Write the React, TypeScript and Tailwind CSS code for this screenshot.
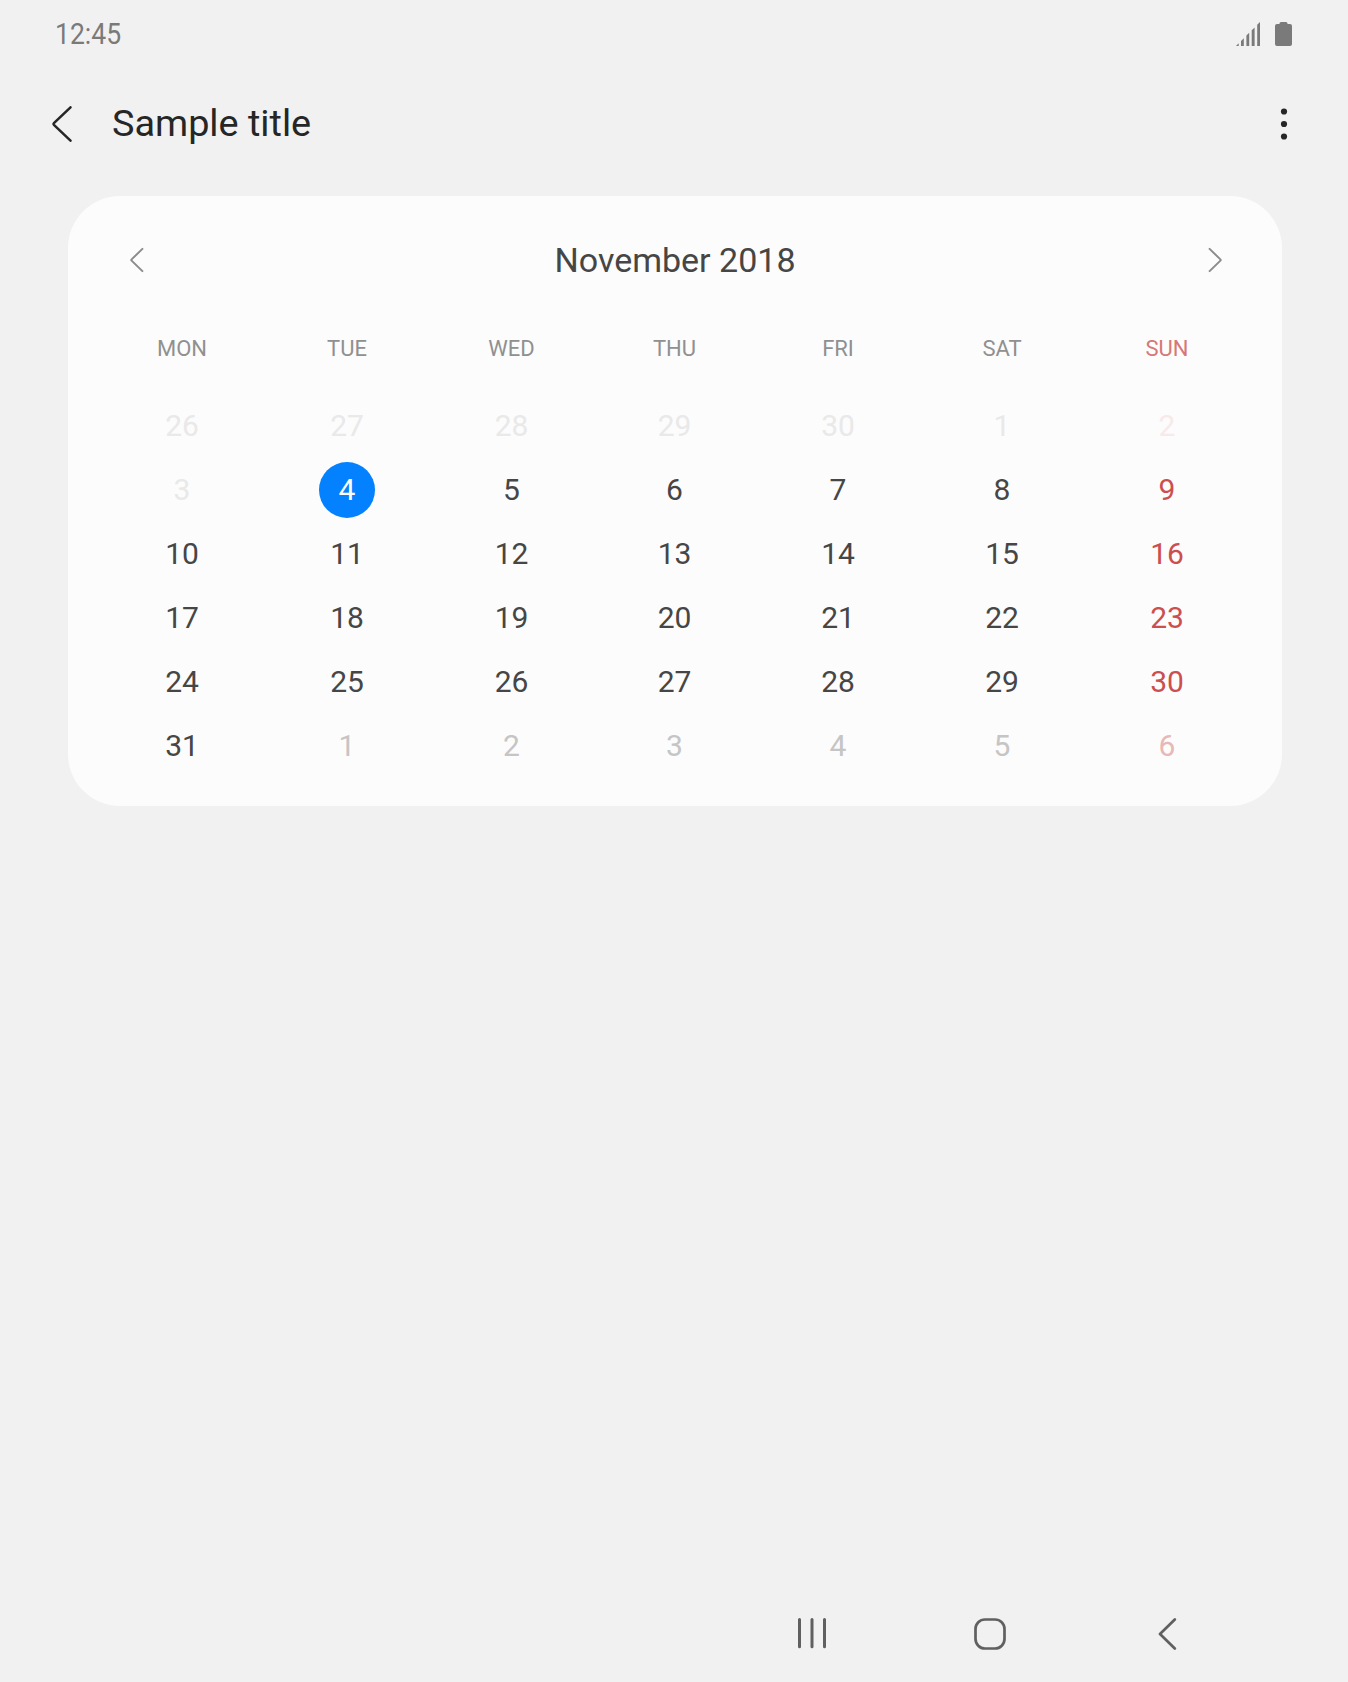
const WEEKDAYS = ["MON", "TUE", "WED", "THU", "FRI", "SAT", "SUN"];

const WEEKS = [
  [26, 27, 28, 29, 30, 1, 2],
  [3, 4, 5, 6, 7, 8, 9],
  [10, 11, 12, 13, 14, 15, 16],
  [17, 18, 19, 20, 21, 22, 23],
  [24, 25, 26, 27, 28, 29, 30],
  [31, 1, 2, 3, 4, 5, 6],
];

const COLUMNS = "grid grid-cols-[164px_166px_163px_163px_164px_164px_166px]";

function dayColor(week: number, col: number) {
  const sunday = col === 6;
  if (week === 0 || (week === 1 && col === 0)) return sunday ? "text-[#f8eaea]" : "text-[#e9e9e9]";
  if (week === 5 && col > 0) return sunday ? "text-[#e8b8b8]" : "text-[#c5c5c5]";
  return sunday ? "text-[#cb4f4f]" : "text-[#464646]";
}

function StatusBar() {
  return (
    <header className="flex h-[68px] items-center justify-between pl-[55px] pr-14 text-[#7a7a7a]">
      <span className="origin-left scale-x-[0.885] text-[30px] leading-none">12:45</span>
      <div className="flex items-start gap-[15px]">
        <svg width="24" height="24" viewBox="0 0 24 24" fill="currentColor">
          <path d="M0 24L2.7 21.3V24ZM5 24V19L7.8 16.2V24ZM10.4 24V13.6L13.2 10.8V24ZM15.7 24V8.3L18.6 5.4V24ZM21.2 24V2.8L24 0V24Z" />
        </svg>
        <svg width="17" height="24" viewBox="0 0 17 24" fill="currentColor">
          <path d="M4.5 1.5Q4.5 0 6 0H11Q12.5 0 12.5 1.5V2H15Q17 2 17 4V22Q17 24 15 24H2Q0 24 0 22V4Q0 2 2 2H4.5Z" />
        </svg>
      </div>
    </header>
  );
}

function AppBar() {
  return (
    <div className="flex h-28 items-center justify-between pl-[52px] pr-[60px] text-[#262626]">
      <div className="flex items-center">
        <svg width="20" height="36" viewBox="0 0 20 36" fill="none" stroke="currentColor" strokeWidth="2.5" strokeLinecap="round" strokeLinejoin="round">
          <path d="M18.5 1.3L1.9 17.2Q1.2 18 1.9 18.8L18.5 34.7" />
        </svg>
        <h1 className="mb-0.5 ml-10 text-[37.8px] leading-[38px]">Sample title</h1>
      </div>
      <svg width="8" height="34" viewBox="0 0 8 34" fill="currentColor">
        <circle cx="4" cy="4.5" r="3.1" />
        <circle cx="4" cy="17" r="3.1" />
        <circle cx="4" cy="29.5" r="3.1" />
      </svg>
    </div>
  );
}

function MonthArrow({ flip = false }: { flip?: boolean }) {
  return (
    <svg
      className={flip ? "-scale-x-100" : ""}
      width="14" height="26" viewBox="0 0 14 26" fill="none" stroke="#8c8c8c" strokeWidth="2" strokeLinecap="round" strokeLinejoin="round"
    >
      <path d="M12.4 1.9L1.6 12.4Q1 13 1.6 13.6L12.4 24.1" />
    </svg>
  );
}

function Calendar() {
  return (
    <section className="ml-[68px] mt-4 h-[610px] w-[1214px] rounded-[52px] bg-[#fcfcfc]">
      <div className="flex h-32 items-center pl-[62px] pr-[60px]">
        <MonthArrow />
        <h2 className="flex-1 pr-0.5 text-center text-[34px] leading-none text-[#464646]">November 2018</h2>
        <MonthArrow flip />
      </div>
      <div className={`${COLUMNS} ml-8 h-[50px] items-center text-center text-[22px] leading-none`}>
        {WEEKDAYS.map((day, i) => (
          <span key={day} className={i === 6 ? "text-[#d67878]" : "text-[#909090]"}>{day}</span>
        ))}
      </div>
      <div className="ml-8 mt-5">
        {WEEKS.map((week, w) => (
          <div key={w} className={`${COLUMNS} h-16 items-center justify-items-center text-[30px] leading-none`}>
            {week.map((day, c) =>
              w === 1 && c === 1 ? (
                <span key={c} className="flex size-14 items-center justify-center rounded-full bg-[#0381fe] text-[#fcfcfc]">{day}</span>
              ) : (
                <span key={c} className={dayColor(w, c)}>{day}</span>
              ),
            )}
          </div>
        ))}
      </div>
    </section>
  );
}

function NavigationBar() {
  return (
    <nav className="mt-auto flex h-24 items-center pl-[797px] text-[#606060]">
      <svg width="30" height="32" viewBox="0 0 30 32" fill="none" stroke="currentColor" strokeWidth="3" strokeLinecap="round">
        <path d="M2.5 1.6V28.8M15 1.6V28.8M27.5 1.6V28.8" />
      </svg>
      <svg className="ml-[147px]" width="32" height="32" viewBox="0 0 32 32" fill="none" stroke="currentColor" strokeWidth="2.7">
        <rect x="1.5" y="1.5" width="29" height="29" rx="9.5" />
      </svg>
      <svg className="ml-[152px]" width="19" height="32" viewBox="0 0 19 32" fill="none" stroke="currentColor" strokeWidth="2.7" strokeLinecap="round" strokeLinejoin="round">
        <path d="M16.8 1.5L2 16L16.8 30.5" />
      </svg>
    </nav>
  );
}

export default function App() {
  return (
    <main className="flex h-[1682px] w-[1348px] flex-col overflow-hidden bg-[#f1f1f1] font-['Roboto',sans-serif] font-normal">
      <StatusBar />
      <AppBar />
      <Calendar />
      <NavigationBar />
    </main>
  );
}
